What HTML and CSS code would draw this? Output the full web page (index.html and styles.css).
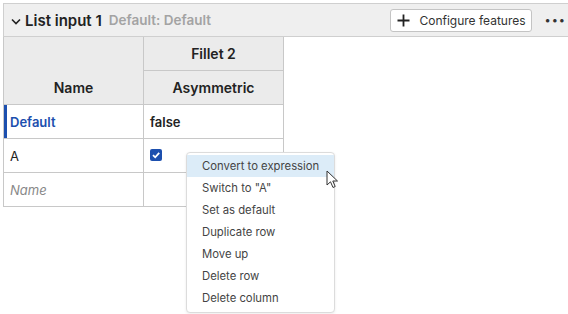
FILE: index.html
```html
<!DOCTYPE html>
<html lang="en">
<head>
    <meta charset="UTF-8">
    <title>List input</title>
    <link rel="stylesheet" href="styles.css">
</head>
<body>
    <div class="panel">
        <div class="panel-header">
            <svg class="chevron" width="12" height="12" viewBox="0 0 12 12"><path d="M2 4.5 L6 8.5 L10 4.5" fill="none" stroke="#222" stroke-width="1.6"/></svg>
            <span class="title">List input 1</span>
            <span class="subtitle">Default: Default</span>
            <button class="btn">
                <svg width="13" height="13" viewBox="0 0 13 13"><path d="M6.5 0.5 V12.5 M0.5 6.5 H12.5" stroke="#222" stroke-width="1.8"/></svg>
                Configure features
            </button>
            <span class="more">&bull;&bull;&bull;</span>
        </div>
        <table class="grid">
            <colgroup>
                <col class="col">
                <col class="col">
            </colgroup>
            <tr class="head">
                <th rowspan="2" class="name-head">Name</th>
                <th>Fillet 2</th>
            </tr>
            <tr class="head">
                <th>Asymmetric</th>
            </tr>
            <tr class="row default">
                <td class="name">Default</td>
                <td class="value">false</td>
            </tr>
            <tr class="row">
                <td class="name plain">A</td>
                <td class="value">
                    <span class="check"><svg width="12" height="12" viewBox="0 0 12 12"><path d="M3 6.2 L5.2 8.3 L9.2 3.8" fill="none" stroke="#fff" stroke-width="1.8"/></svg></span>
                </td>
            </tr>
            <tr class="row">
                <td class="name placeholder">Name</td>
                <td class="value"></td>
            </tr>
        </table>
    </div>

    <ul class="menu">
        <li class="active">Convert to expression</li>
        <li>Switch to "A"</li>
        <li>Set as default</li>
        <li>Duplicate row</li>
        <li>Move up</li>
        <li>Delete row</li>
        <li>Delete column</li>
    </ul>

    <svg class="cursor" width="14" height="20" viewBox="0 0 14 20"><path d="M1 1 L1 15 L4.5 11.8 L7 17.5 L9.2 16.5 L6.8 11 L11.5 11 Z" fill="#fff" stroke="#333" stroke-width="1"/></svg>
</body>
</html>
```

FILE: styles.css
```css
body {
    margin: 0;
    padding: 3px 0 0 3px;
    font-family: Inter, "Noto Sans", sans-serif;
    background: #fff;
    color: #222;
}
.panel-header {
    display: flex;
    align-items: center;
    height: 32px;
    background: #efefef;
    border-top: 1px solid #cfcfcf;
    border-left: 1px solid #cfcfcf;
    border-bottom: 1px solid #cfcfcf;
    padding-left: 6px;
}
.chevron {
    margin-right: 3px;
    margin-top: 2px;
}
.title {
    font-size: 15px;
    font-weight: 600;
    color: #222;
}
.subtitle {
    margin-left: 7px;
    font-size: 13.5px;
    font-weight: 600;
    color: #a3a3a3;
}
.btn {
    margin-left: auto;
    display: flex;
    align-items: center;
    gap: 9px;
    width: 142px;
    height: 23px;
    padding: 0 0 0 6px;
    background: #fff;
    border: 1px solid #c4c4c4;
    border-radius: 3px;
    font-family: inherit;
    font-size: 12px;
    color: #333;
}
.more {
    margin: 0 2px 0 12px;
    font-size: 11px;
    letter-spacing: 1px;
    color: #333;
}
.grid {
    border-collapse: collapse;
    table-layout: fixed;
    width: 281px;
    font-size: 13px;
}
.col {
    width: 140px;
}
.grid th, .grid td {
    border: 1px solid #c8c8c8;
    height: 33px;
    padding: 0;
}
.grid th {
    background: #ebebeb;
    font-size: 14px;
    font-weight: 600;
    color: #222;
}
.grid tr:first-child th {
    border-top: none;
}
.grid th.name-head {
    vertical-align: bottom;
    padding-bottom: 8px;
}
.grid td {
    padding-left: 6px;
}
.row.default td.name {
    color: #1c4fae;
    font-weight: 600;
    box-shadow: inset 3px 0 0 #1c4fae;
}
.row.default td.value {
    font-weight: 600;
}
.placeholder {
    font-style: italic;
    color: #888;
}
.check {
    display: inline-flex;
    align-items: center;
    justify-content: center;
    width: 12px;
    height: 12px;
    margin-top: 2px;
    background: #1c4fae;
    border-radius: 2px;
}
.menu {
    position: absolute;
    left: 186px;
    top: 152px;
    width: 147px;
    margin: 0;
    padding: 2px 0 3px;
    list-style: none;
    background: #fff;
    border: 1px solid #dcdcdc;
    border-radius: 4px;
    box-shadow: 0 1px 3px rgba(0, 0, 0, 0.08);
    font-size: 11.3px;
    color: #444;
}
.menu li {
    height: 22px;
    line-height: 22px;
    padding-left: 15px;
}
.menu li.active {
    background: #dcecf8;
}
.cursor {
    position: absolute;
    left: 326px;
    top: 170px;
}
```
